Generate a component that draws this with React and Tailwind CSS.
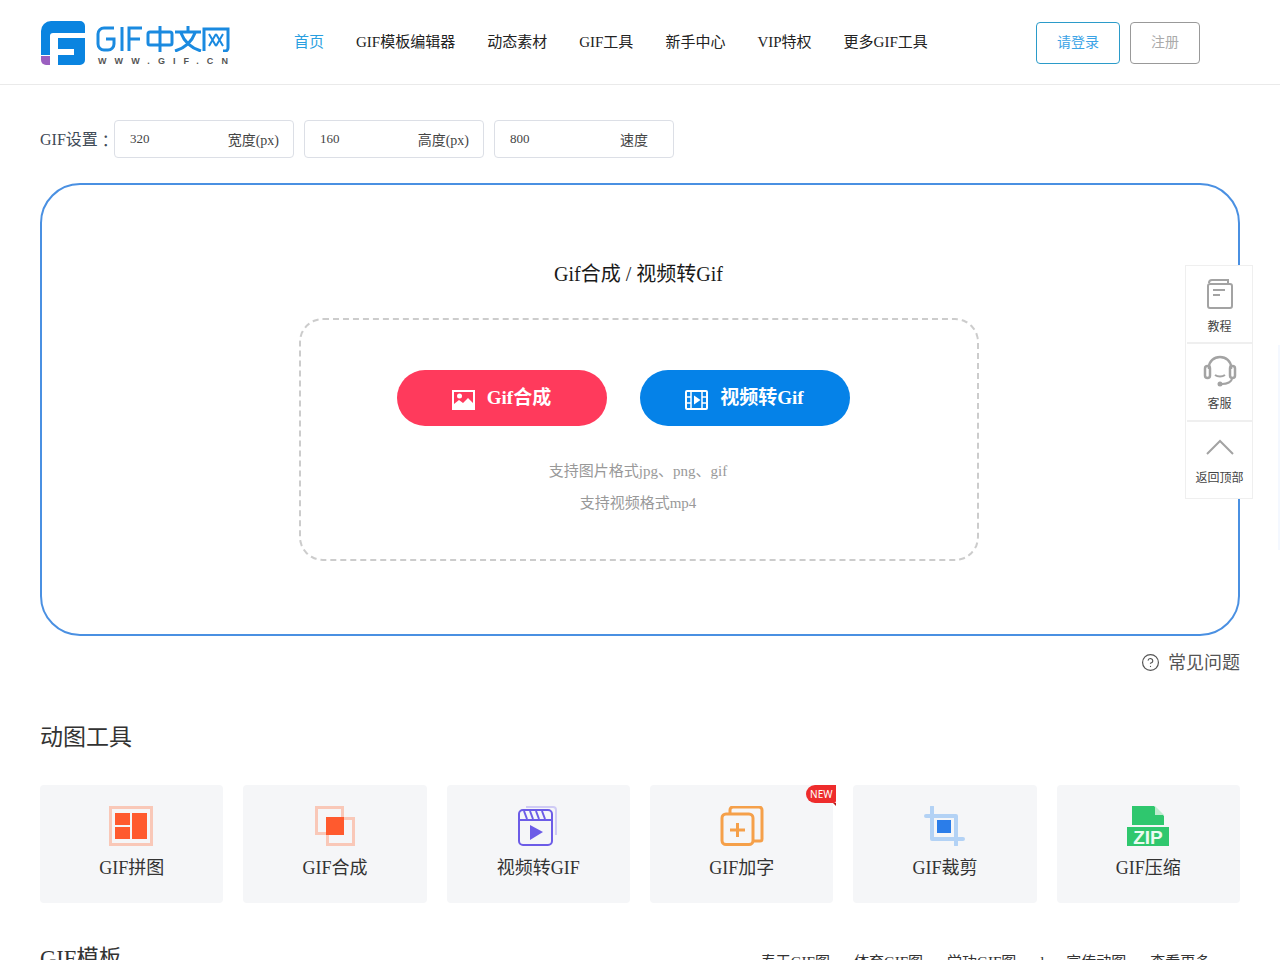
import { CircleHelp } from "lucide-react";

const font = "font-['Liberation_Serif','Noto_Sans_CJK_SC',serif]";

const navItems = ["首页", "GIF模板编辑器", "动态素材", "GIF工具", "新手中心", "VIP特权", "更多GIF工具"];

function Logo() {
    return (
        <div className="flex items-start gap-[11px] w-[190px] mt-[2px]">
            <svg width="44" height="44" viewBox="0 0 44 44" className="shrink-0">
                <path d="M0 10 a10 10 0 0 1 10 -10 H39 a5 5 0 0 1 5 5 V12 H12 a3 3 0 0 0 -3 3 V34 H0 Z" fill="#0a84e0" />
                <path d="M0 35 H9 V44 H5 a5 5 0 0 1 -5 -5 Z" fill="#9b5fc0" />
                <path d="M17 17 H44 V39 a5 5 0 0 1 -5 5 H17 V34 H33 V28 H17 Z" fill="#0a84e0" />
            </svg>
            <div className="flex flex-col mt-[5px]">
                <svg width="135" height="26" viewBox="0 0 135 26" fill="none" stroke="#1a8ae0" strokeWidth="3">
                    <path d="M18 2 H8 a6 6 0 0 0 -6 6 V18 a6 6 0 0 0 6 6 H12 a6 6 0 0 0 6 -6 V13 H10" />
                    <path d="M26 1 V25" />
                    <path d="M33 25 V2 H46 M33 13 H44" />
                    <rect x="52" y="6" width="24" height="13" rx="2" />
                    <path d="M64 0 V26" />
                    <path d="M92 0 V5 M79 6 H105 M85 7 C88 15 95 22 105 25 M99 7 C96 15 89 22 79 25" />
                    <path d="M108 25 V3 H132 V22 a3 3 0 0 1 -3 3 H127" />
                    <path d="M113 8 L120 20 M120 8 L113 20 M120 8 L127 20 M127 8 L120 20" strokeWidth="2" />
                </svg>
                <span className="font-['Liberation_Sans',sans-serif] font-bold text-[9px] leading-[10px] mt-[4px] ml-[2px] text-[#555] tracking-[8.1px] whitespace-nowrap">WWW.GIF.CN</span>
            </div>
        </div>
    );
}

function Header() {
    return (
        <div className="h-[85px] border-b border-[#eaeaea] flex items-center pl-[41px] bg-white">
            <Logo />
            <div className="flex ml-[63px] gap-[32px] text-[15px] text-[#222]">
                {navItems.map((n, i) => (
                    <span key={n} className={i === 0 ? "text-[#2a9fe0]" : ""}>{n}</span>
                ))}
            </div>
            <div className="ml-auto mr-[80px] mt-[2px] flex gap-[10px] text-[14px]">
                <button className="w-[84px] h-[42px] pb-[2px] border border-[#2b9bc9] rounded text-[#3ba3e6]">请登录</button>
                <button className="w-[70px] h-[42px] pb-[2px] border border-[#999] rounded text-[#aaa]">注册</button>
            </div>
        </div>
    );
}

function SettingInput({ value, label, labelClass }) {
    return (
        <div className="w-[180px] h-[38px] border border-[#dcdfe6] rounded flex items-center justify-between pl-[15px] pr-[14px]">
            <span className="text-[13px] text-[#444]">{value}</span>
            <span className={`text-[14px] text-[#444] mt-[2px] ${labelClass || ""}`}>{label}</span>
        </div>
    );
}

function UploadBox() {
    return (
        <div className="mt-[25px] h-[453px] border-2 border-[#4a90e2] rounded-[40px] flex flex-col items-center pt-[75px]">
            <div className="text-[20px] leading-[28px] text-[#1a1a1a] mr-[3px]">Gif合成 / 视频转Gif</div>
            <div className="mt-[30px] mr-[2px] w-[680px] h-[243px] border-2 border-dashed border-[#ccc] rounded-[24px] flex flex-col items-center pt-[50px]">
                <div className="flex gap-[33px] mr-[32px]">
                    <button className="w-[210px] h-[56px] rounded-[28px] bg-[#ff3a5c] text-white font-bold text-[19px] flex items-center justify-center gap-[12px]">
                        <svg width="23" height="20" viewBox="0 0 23 20" className="mt-[3px]">
                            <path fillRule="evenodd" d="M0 0 H23 V20 H0 Z M2 2 V14 L7 10 L11 13 L16 8 L21 13 V2 Z" fill="#fff" />
                            <circle cx="7.500" cy="6" r="2.500" fill="#fff" />
                        </svg>
                        <span className="mt-[1px]">Gif合成</span>
                    </button>
                    <button className="w-[210px] h-[56px] rounded-[28px] bg-[#0582e8] text-white font-bold text-[19px] flex items-center justify-center gap-[12px]">
                        <svg width="23" height="20" viewBox="0 0 23 20" className="mt-[3px]">
                            <rect x="1" y="1" width="21" height="18" rx="1" fill="none" stroke="#fff" strokeWidth="2" />
                            <path d="M6 1 V19 M17 1 V19 M1 7 H6 M1 13 H6 M17 7 H22 M17 13 H22" stroke="#fff" strokeWidth="1.500" />
                            <path d="M9 5.500 L15.500 10 L9 14.500 Z" fill="#fff" />
                        </svg>
                        <span className="mt-[1px]">视频转Gif</span>
                    </button>
                </div>
                <div className="mt-[29px] mr-[2px] text-[15px] leading-[32px] text-[#999] text-center">
                    <div>支持图片格式jpg、png、gif</div>
                    <div>支持视频格式mp4</div>
                </div>
            </div>
        </div>
    );
}

const IconCollage = () => (
    <svg width="44" height="40" viewBox="0 0 44 40" className="mr-[1px]">
        <rect x="1.500" y="1.500" width="41" height="37" fill="none" stroke="#f9c8b8" strokeWidth="3" />
        <rect x="6" y="7" width="15" height="12" fill="#ff5a2e" />
        <rect x="6" y="21" width="15" height="12" fill="#ff5a2e" />
        <rect x="23" y="7" width="15" height="26" fill="#ff5a2e" />
    </svg>
);

const IconMerge = () => (
    <svg width="44" height="40" viewBox="0 0 44 40">
        <rect x="3.500" y="1.500" width="26" height="26" fill="none" stroke="#f9c8b8" strokeWidth="3" />
        <rect x="14.500" y="12.500" width="26" height="26" fill="none" stroke="#f9c8b8" strokeWidth="3" />
        <rect x="13" y="11" width="18" height="18" fill="#ff5a2e" />
    </svg>
);

const IconVideo = () => (
    <svg width="44" height="40" viewBox="0 0 44 40">
        <path d="M10 1 H37 a3 3 0 0 1 3 3 V29" fill="none" stroke="#cfcbf5" strokeWidth="2" />
        <rect x="3" y="4" width="33" height="35" rx="4" fill="#f5f6f8" stroke="#6c5ce7" strokeWidth="2" />
        <path d="M3 14 H36" stroke="#6c5ce7" strokeWidth="2" />
        <path d="M8 5 L11 13 M14 5 L17 13 M20 5 L23 13 M26 5 L29 13" stroke="#6c5ce7" strokeWidth="2" />
        <path d="M14 19 L27 26 L14 34 Z" fill="#6c5ce7" />
    </svg>
);

const IconText = () => (
    <svg width="44" height="40" viewBox="0 0 44 40" fill="none" stroke="#f5a04a" strokeWidth="3">
        <path d="M10 7 V4 a3 3 0 0 1 3 -3 H39 a3 3 0 0 1 3 3 V33 a2 2 0 0 1 -2 2 H33" />
        <rect x="2" y="8" width="31" height="30.500" rx="4" />
        <path d="M10 24 H25 M17.500 17 V31" strokeWidth="3" />
    </svg>
);

const IconCrop = () => (
    <svg width="44" height="40" viewBox="0 0 44 40">
        <path d="M9 1 V33 H40 M3 10 H33 V39" fill="none" stroke="#b3d2f5" strokeWidth="4" strokeLinecap="round" strokeLinejoin="round" />
        <rect x="14" y="14" width="14" height="13" fill="#2b7de9" />
    </svg>
);

const IconZip = () => (
    <svg width="44" height="40" viewBox="0 0 44 40">
        <path d="M6 0 H28 L38 10 V19 H6 Z" fill="#2fc76e" />
        <path d="M29 0 L38 9 H29 Z" fill="#bfeccf" />
        <rect x="1" y="21" width="42" height="19" fill="#2fc76e" />
        <text x="22" y="37.500" textAnchor="middle" fontSize="19" fontWeight="700" fill="#eafbf1" fontFamily="Liberation Sans, sans-serif">ZIP</text>
    </svg>
);

const tools = [
    { name: "GIF拼图", icon: <IconCollage /> },
    { name: "GIF合成", icon: <IconMerge /> },
    { name: "视频转GIF", icon: <IconVideo /> },
    { name: "GIF加字", icon: <IconText />, isNew: true },
    { name: "GIF裁剪", icon: <IconCrop /> },
    { name: "GIF压缩", icon: <IconZip /> },
];

function ToolCard({ name, icon, isNew }) {
    return (
        <div className="relative h-[118px] bg-[#f5f6f8] rounded flex flex-col items-center pt-[21px]">
            {icon}
            <span className="mt-[9px] text-[18px] leading-[26px] text-[#333]">{name}</span>
            {isNew && (
                <span className="absolute top-0 right-[-3px] w-[30px] h-[18px] bg-[#ee2c2c] rounded-l-[9px] rounded-br-[2px] text-white text-[10px] leading-[18px] text-center font-['Noto_Sans',sans-serif]">
                    NEW
                    <i className="absolute right-0 bottom-[-3px] border-t-[3px] border-l-[3px] border-t-[#b51c1c] border-l-transparent"></i>
                </span>
            )}
        </div>
    );
}

const sideItems = [
    {
        label: "教程",
        rowClass: "h-[76px] pb-[7px]",
        iconClass: "mb-[7px]",
        icon: (
            <svg width="28" height="32" viewBox="0 0 28 32" fill="none" stroke="#a3a3a3" strokeWidth="2">
                <path d="M3 5 a3 3 0 0 1 3 -3 H22 V6" />
                <rect x="2" y="6" width="24" height="24" rx="2" />
                <path d="M7 12 H19 M7 17 H14" />
            </svg>
        ),
    },
    {
        label: "客服",
        rowClass: "h-[78px] pb-[8px] border-t-2 border-[#efefef]",
        iconClass: "mb-[7px]",
        icon: (
            <svg width="34" height="32" viewBox="0 0 34 32" fill="none" stroke="#a3a3a3" strokeWidth="2.500">
                <path d="M6 14 V12 a11 10 0 0 1 22 0 V14" />
                <rect x="2" y="11" width="5" height="12" rx="2.500" />
                <rect x="27" y="11" width="5" height="12" rx="2.500" />
                <path d="M12 20 a7 5 0 0 0 10 0" strokeWidth="2" />
                <path d="M29 23 C 29 27 24 29 19 29" strokeWidth="2" />
                <circle cx="17" cy="29" r="2.500" fill="#a3a3a3" stroke="none" />
            </svg>
        ),
    },
    {
        label: "返回顶部",
        rowClass: "h-[78px] pb-[12px] border-t-2 border-[#efefef]",
        iconClass: "mb-[5px]",
        icon: (
            <svg width="30" height="18" viewBox="0 0 30 18" fill="none" stroke="#a3a3a3" strokeWidth="2">
                <path d="M2 16 L15 3 L28 16" />
            </svg>
        ),
    },
];

function SideBar() {
    return (
        <div className="absolute left-[1185px] top-[265px] w-[68px] pl-px bg-white border border-[#efefef] flex flex-col">
            {sideItems.map(s => (
                <div key={s.label} className={`flex flex-col items-center justify-end ${s.rowClass}`}>
                    <div className={`h-[36px] flex items-center justify-center ${s.iconClass}`}>{s.icon}</div>
                    <span className="text-[12px] leading-[16px] text-[#444]">{s.label}</span>
                </div>
            ))}
        </div>
    );
}

export default function App() {
    return (
        <div className={`relative h-[960px] overflow-hidden bg-white ${font}`}>
            <Header />
            <div className="px-[40px]">
                <div className="mt-[35px] flex items-center gap-[10px]">
                    <span className="text-[16px] text-[#3f4b57] w-[64px] whitespace-nowrap">
                        GIF设置<span className="inline-block translate-y-[2px] font-['Noto_Sans_CJK_TC',sans-serif]">：</span>
                    </span>
                    <SettingInput value="320" label="宽度(px)" />
                    <SettingInput value="160" label="高度(px)" />
                    <SettingInput value="800" label="速度" labelClass="mr-[11px]" />
                </div>
                <UploadBox />
                <div className="mt-[14px] flex items-center justify-end gap-[8px] text-[18px] leading-[26px] text-[#555]">
                    <CircleHelp size={19} strokeWidth={1.5} className="mb-[2px]" />
                    <span>常见问题</span>
                </div>
                <div className="mt-[45px] text-[23px] leading-[34px] text-[#333]">动图工具</div>
                <div className="mt-[30px] grid grid-cols-6 gap-[20px]">
                    {tools.map(t => (
                        <ToolCard key={t.name} {...t} />
                    ))}
                </div>
                <div className="mt-[41px] flex items-start justify-between">
                    <span className="text-[22.500px] leading-[30px] text-[#333]">GIF模板</span>
                    <div className="flex gap-[24px] text-[15px] leading-[22px] text-[#333] mt-[7px] mr-[21px]">
                        <span>春天GIF图</span>
                        <span>体育GIF图</span>
                        <span>学功GIF图</span>
                        <span className="w-[2px]">l</span>
                        <span>宣传动图</span>
                        <span>查看更多 ›</span>
                    </div>
                </div>
            </div>
            <SideBar />
            <div className="absolute right-0 top-[345px] w-[2px] h-[205px] bg-[#f4f8ff]"></div>
        </div>
    );
}
